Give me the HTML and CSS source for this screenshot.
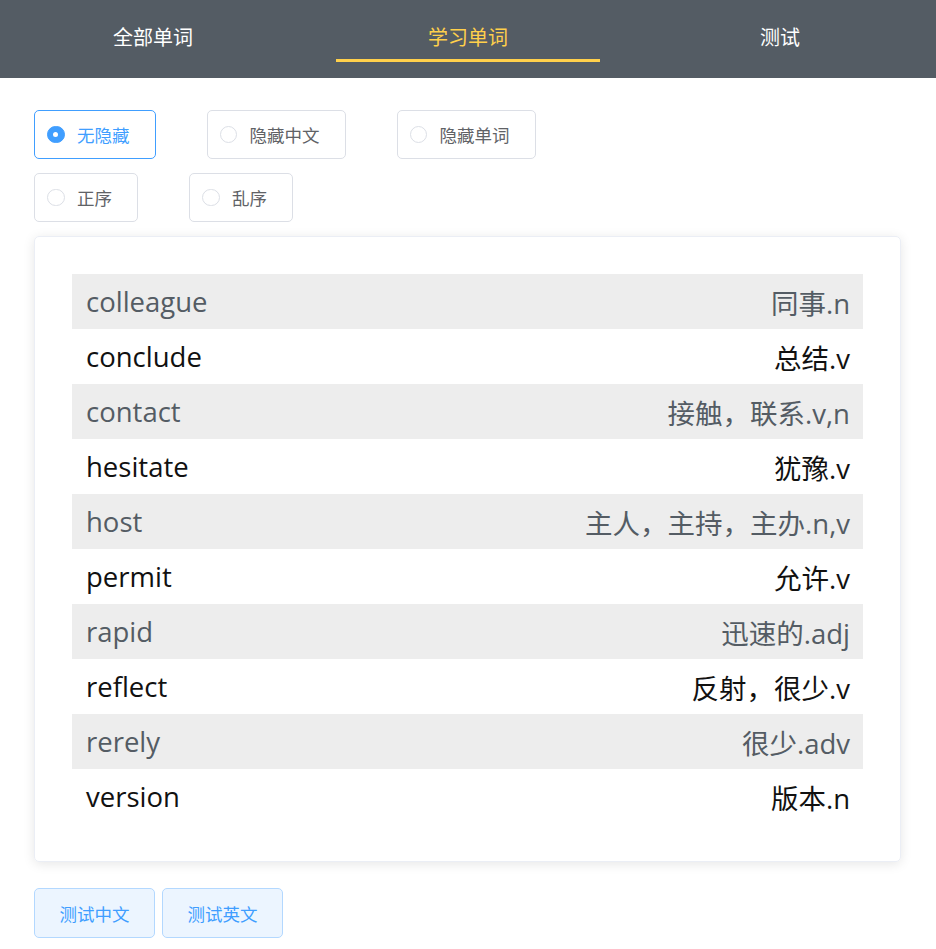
FILE: index.html
```html
<!DOCTYPE html>
<html lang="zh">
<head>
<meta charset="utf-8">
<link rel="stylesheet" href="styles.css">
</head>
<body>
<header class="nav">
  <div class="tab"><span class="tab-label">全部单词</span></div>
  <div class="tab active"><span class="tab-label">学习单词</span></div>
  <div class="tab"><span class="tab-label">测试</span></div>
</header>
<main class="page">
  <div class="radio-group">
    <label class="radio checked"><span class="dot"></span><span class="radio-text">无隐藏</span></label>
    <label class="radio"><span class="dot"></span><span class="radio-text">隐藏中文</span></label>
    <label class="radio"><span class="dot"></span><span class="radio-text">隐藏单词</span></label>
  </div>
  <div class="radio-group second">
    <label class="radio"><span class="dot"></span><span class="radio-text">正序</span></label>
    <label class="radio"><span class="dot"></span><span class="radio-text">乱序</span></label>
  </div>
  <section class="card">
    <div class="row odd"><span>colleague</span><span>同事.n</span></div>
    <div class="row"><span>conclude</span><span>总结.v</span></div>
    <div class="row odd"><span>contact</span><span>接触，联系.v,n</span></div>
    <div class="row"><span>hesitate</span><span>犹豫.v</span></div>
    <div class="row odd"><span>host</span><span>主人，主持，主办.n,v</span></div>
    <div class="row"><span>permit</span><span>允许.v</span></div>
    <div class="row odd"><span>rapid</span><span>迅速的.adj</span></div>
    <div class="row"><span>reflect</span><span>反射，很少.v</span></div>
    <div class="row odd"><span>rerely</span><span>很少.adv</span></div>
    <div class="row"><span>version</span><span>版本.n</span></div>
  </section>
  <div class="actions">
    <button class="btn">测试中文</button>
    <button class="btn">测试英文</button>
  </div>
</main>
</body>
</html>
```
FILE: styles.css
```css
* { box-sizing: border-box; }
body {
  margin: 0;
  font-family: "Open Sans", "Noto Sans CJK SC", sans-serif;
  background: #fff;
}
.nav {
  height: 78px;
  background: #545c64;
  display: flex;
  padding-top: 14px;
}
.tab {
  flex: 1;
  margin: 0 24px;
  height: 48px;
  border-bottom: 3px solid transparent;
  display: flex;
  align-items: center;
  justify-content: center;
  color: #fff;
  font-size: 20px;
  font-family: "Noto Sans CJK SC", sans-serif;
}
.tab:first-child .tab-label { margin-right: 6px; }
.tab.active {
  color: #ffd04b;
  border-bottom-color: #ffd04b;
}
.page {
  padding: 32px 35px 0 34px;
}
.radio-group {
  display: flex;
  gap: 51px;
}
.radio-group.second { margin-top: 14px; }
.radio {
  display: inline-flex;
  align-items: center;
  height: 49px;
  padding: 0 25px 0 12px;
  border: 1px solid #dcdfe6;
  border-radius: 5px;
  color: #606266;
  font-size: 17.5px;
  font-family: "Noto Sans CJK SC", sans-serif;
}
.dot {
  width: 17.5px;
  height: 17.5px;
  border-radius: 50%;
  border: 1px solid #dcdfe6;
  margin-right: 12.5px;
  display: flex;
  align-items: center;
  justify-content: center;
}
.radio.checked { border-color: #409eff; color: #409eff; }
.radio.checked .dot { background: #409eff; border-color: #409eff; }
.radio.checked .dot::after {
  content: "";
  width: 5px;
  height: 5px;
  border-radius: 50%;
  background: #fff;
}
.card {
  margin-top: 14px;
  border: 1px solid #ebeef5;
  border-radius: 5px;
  box-shadow: 0 2px 12px 0 rgba(0,0,0,0.1);
  padding: 37px;
}
.row {
  height: 55px;
  display: flex;
  align-items: center;
  justify-content: space-between;
  padding: 0 13px 0 14px;
  font-size: 27.5px;
  color: #111;
}
.row.odd {
  background: #ededed;
  color: #545c64;
}
.actions {
  margin-top: 26px;
  display: flex;
  gap: 7px;
}
.btn {
  width: 121px;
  height: 50px;
  background: #ecf5ff;
  border: 1px solid #b3d8ff;
  color: #409eff;
  border-radius: 5px;
  font-size: 17.5px;
  font-family: "Noto Sans CJK SC", sans-serif;
  padding: 0;
}
```
